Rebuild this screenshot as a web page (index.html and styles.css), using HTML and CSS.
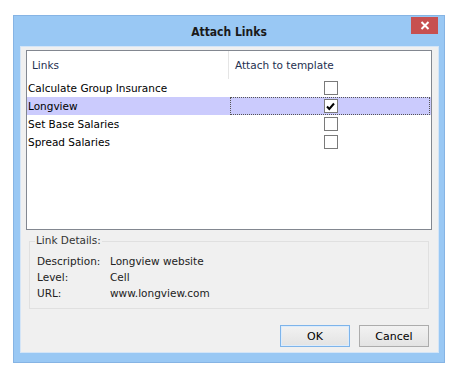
FILE: index.html
```html
<!DOCTYPE html>
<html>
<head>
<meta charset="utf-8">
<link rel="stylesheet" href="styles.css">
</head>
<body>
<div class="window">
  <div class="titlebar">
    <span></span>
    <span class="title">Attach Links</span>
    <span class="close">
      <svg width="10" height="9" viewBox="0 0 10 9"><path d="M1.5 1 L8.5 8 M8.5 1 L1.5 8" stroke="#fff" stroke-width="2"/></svg>
    </span>
  </div>
  <div class="panel">
    <div class="list">
      <div class="head">
        <div class="hcell c1">Links</div>
        <div class="hcell c2">Attach to template</div>
      </div>
      <div class="row">
        <div class="cell c1">Calculate Group Insurance</div>
        <div class="cell c2"><span class="cb"></span></div>
      </div>
      <div class="row sel">
        <div class="cell c1">Longview</div>
        <div class="cell c2 focus"><span class="cb">
          <svg width="11" height="11" viewBox="0 0 11 11"><path d="M2 5.5 L4.3 8 L9 2.5" fill="none" stroke="#000" stroke-width="2"/></svg>
        </span></div>
      </div>
      <div class="row">
        <div class="cell c1">Set Base Salaries</div>
        <div class="cell c2"><span class="cb"></span></div>
      </div>
      <div class="row">
        <div class="cell c1">Spread Salaries</div>
        <div class="cell c2"><span class="cb"></span></div>
      </div>
    </div>
    <div class="group">
      <div class="legend">Link Details:</div>
      <div class="details">
        <span>Description:</span><span>Longview website</span>
        <span>Level:</span><span>Cell</span>
        <span>URL:</span><span>www.longview.com</span>
      </div>
    </div>
    <div class="buttons">
      <button class="btn ok">OK</button>
      <button class="btn">Cancel</button>
    </div>
  </div>
</div>
</body>
</html>
```
FILE: styles.css
```css
html, body {
  margin: 0;
  padding: 0;
  background: #ffffff;
}
body {
  font-family: "DejaVu Sans", sans-serif;
  font-size: 10.5px;
  color: #000;
}
.window {
  margin: 15px 0 0 13px;
  width: 430px;
  height: 346px;
  background: #99c8f4;
  border: 1px solid #86b4e4;
  display: flex;
  flex-direction: column;
}
.titlebar {
  height: 30px;
  display: grid;
  grid-template-columns: 1fr auto 1fr;
  align-items: start;
}
.title {
  font-weight: bold;
  font-size: 12px;
  color: #1a1a1a;
  margin-top: 9px;
  font-family: "DejaVu Sans Condensed", "DejaVu Sans", sans-serif;
}
.close {
  justify-self: end;
  margin-top: 1px;
  margin-right: 6px;
  width: 27px;
  height: 17px;
  background: #c75050;
  display: flex;
  align-items: center;
  justify-content: center;
}
.panel {
  margin: 0 5px 9px 6px;
  flex: 1;
  background: #f0f0f0;
  border: 1px solid #d4e5f7;
  display: flex;
  flex-direction: column;
  padding: 3px 6px 0 5px;
}
.list {
  height: 178px;
  background: #fff;
  border: 1px solid #828790;
}
.head {
  display: flex;
  height: 28px;
  background: #fff;
}
.hcell {
  display: flex;
  align-items: center;
  padding-left: 5px;
  color: #1e3050;
}
.head .c1 {
  width: 196px;
  border-right: 1px solid #e5e5e5;
}
.head .c2 {
  flex: 1;
  padding-left: 6px;
}
.row {
  display: flex;
  height: 18px;
}
.row .c1 {
  width: 201px;
  padding-left: 1px;
  display: flex;
  align-items: center;
  white-space: nowrap;
}
.row .c2 {
  flex: 1;
  display: flex;
  align-items: center;
  justify-content: center;
  padding-left: 1px;
}
.row.sel {
  background: #cbcbfd;
}
.focus {
  border: 1px dotted #555;
  margin: 0 1px 0 1px;
}
.cb {
  width: 12px;
  height: 12px;
  border: 1px solid #7a7a7a;
  background: #fff;
  display: flex;
  align-items: center;
  justify-content: center;
}
.group {
  margin: 11px 3px 0 3px;
  height: 66px;
  border: 1px solid #e0e0e0;
  position: relative;
}
.legend {
  position: absolute;
  top: -8px;
  left: 5px;
  background: #f0f0f0;
  padding: 0 1px;
  color: #333;
}
.details {
  display: grid;
  grid-template-columns: 73px auto;
  row-gap: 4px;
  margin: 13px 0 0 7px;
  color: #222;
}
.buttons {
  display: flex;
  justify-content: flex-end;
  gap: 9px;
  margin-top: 16px;
  padding-right: 3px;
}
.btn {
  width: 70px;
  height: 22px;
  font-family: inherit;
  font-size: 11px;
  color: #000;
  background: linear-gradient(#f2f2f2, #e3e3e3);
  border: 1px solid #acacac;
  padding: 0;
}
.btn.ok {
  border: 1px solid #7eb4ea;
  box-shadow: inset 0 0 0 1px #dcecfc;
}
```
